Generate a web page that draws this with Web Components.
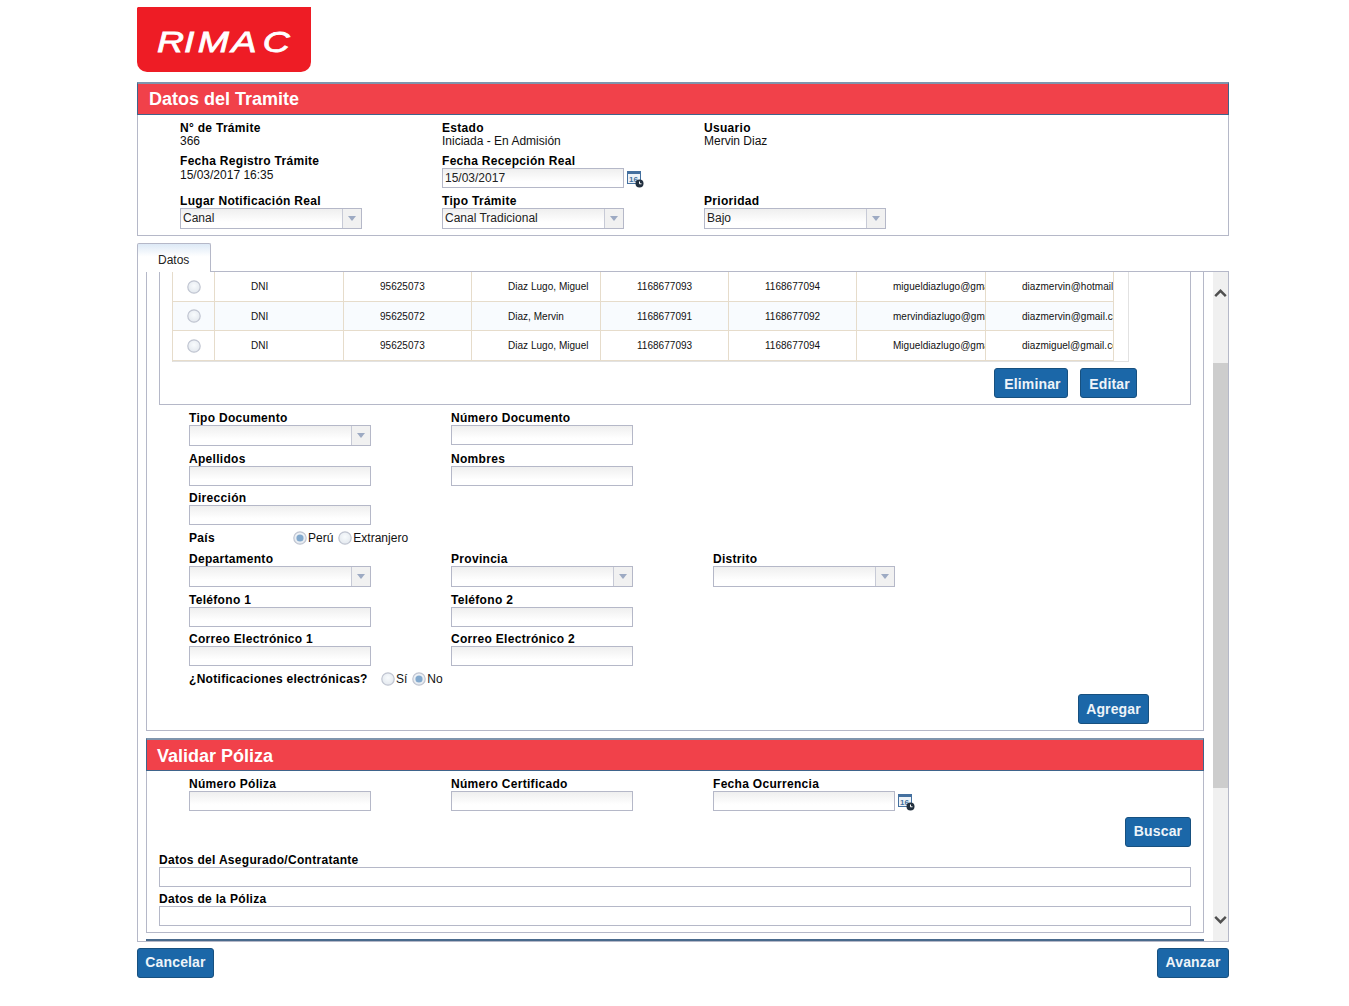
<!DOCTYPE html>
<html lang="es">
<head>
<meta charset="utf-8">
<title>Datos del Tramite</title>
<style>
html,body{margin:0;padding:0;background:#fff}
body{font:12px/13px "Liberation Sans",Arial,sans-serif;color:#000}
rim-app{margin-left:137px}
</style>
</head>
<body>
<rim-app>
  <rim-logo></rim-logo>
  <rim-panel title="Datos del Tramite" outer>
    <rim-row top="7">
      <rim-field label="N° de Trámite" value="366"></rim-field>
      <rim-field label="Estado" value="Iniciada - En Admisión"></rim-field>
      <rim-field label="Usuario" value="Mervin Diaz"></rim-field>
    </rim-row>
    <rim-row top="7">
      <rim-field label="Fecha Registro Trámite" value="15/03/2017 16:35" vgap="1"></rim-field>
      <rim-field label="Fecha Recepción Real" kind="date" value="15/03/2017"></rim-field>
    </rim-row>
    <rim-row top="7" bottom="6">
      <rim-field label="Lugar Notificación Real" kind="combo" value="Canal"></rim-field>
      <rim-field label="Tipo Trámite" kind="combo" value="Canal Tradicional"></rim-field>
      <rim-field label="Prioridad" kind="combo" value="Bajo"></rim-field>
    </rim-row>
  </rim-panel>
  <rim-tab label="Datos"></rim-tab>
  <rim-tabbody>
    <rim-box>
      <rim-group>
        <rim-table></rim-table>
        <rim-actions pad="53" top="6" bottom="6">
          <rim-btn w="74" lh="31" indent="3">Eliminar</rim-btn>
          <rim-btn w="57" lh="31" indent="2">Editar</rim-btn>
        </rim-actions>
      </rim-group>
      <rim-row top="7">
        <rim-field label="Tipo Documento" kind="combo"></rim-field>
        <rim-field label="Número Documento" kind="text"></rim-field>
      </rim-row>
      <rim-row top="7">
        <rim-field label="Apellidos" kind="text"></rim-field>
        <rim-field label="Nombres" kind="text"></rim-field>
      </rim-row>
      <rim-row top="6">
        <rim-field label="Dirección" kind="text"></rim-field>
      </rim-row>
      <rim-row top="6">
        <rim-choice label="País" offset="104">
          <rim-radio checked>Perú</rim-radio>
          <rim-radio>Extranjero</rim-radio>
        </rim-choice>
      </rim-row>
      <rim-row top="8">
        <rim-field label="Departamento" kind="combo"></rim-field>
        <rim-field label="Provincia" kind="combo"></rim-field>
        <rim-field label="Distrito" kind="combo"></rim-field>
      </rim-row>
      <rim-row top="7">
        <rim-field label="Teléfono 1" kind="text"></rim-field>
        <rim-field label="Teléfono 2" kind="text"></rim-field>
      </rim-row>
      <rim-row top="6">
        <rim-field label="Correo Electrónico 1" kind="text"></rim-field>
        <rim-field label="Correo Electrónico 2" kind="text"></rim-field>
      </rim-row>
      <rim-row top="6">
        <rim-choice label="¿Notificaciones electrónicas?" offset="192">
          <rim-radio>Sí</rim-radio>
          <rim-radio checked>No</rim-radio>
        </rim-choice>
      </rim-row>
      <rim-actions pad="54" top="8" bottom="6">
        <rim-btn w="71" lh="29">Agregar</rim-btn>
      </rim-actions>
    </rim-box>
    <rim-panel title="Validar Póliza" inner>
      <rim-row top="7">
        <rim-field label="Número Póliza" kind="text"></rim-field>
        <rim-field label="Número Certificado" kind="text"></rim-field>
        <rim-field label="Fecha Ocurrencia" kind="date"></rim-field>
      </rim-row>
      <rim-actions pad="12" top="6" bottom="7">
        <rim-btn w="66">Buscar</rim-btn>
      </rim-actions>
      <rim-wide label="Datos del Asegurado/Contratante"></rim-wide>
      <rim-wide label="Datos de la Póliza" top="6" bottom="6"></rim-wide>
    </rim-panel>
    <rim-panel title="" inner cut></rim-panel>
  </rim-tabbody>
  <rim-footer>
    <rim-btn w="77">Cancelar</rim-btn>
    <rim-btn w="72">Avanzar</rim-btn>
  </rim-footer>
</rim-app>

<script>
function def(name, css, html, after){
  customElements.define(name, class extends HTMLElement{
    constructor(){super();this.attachShadow({mode:'open'});}
    connectedCallback(){
      const a=n=>this.getAttribute(n);
      this.shadowRoot.innerHTML='<style>'+css+'</style>'+(typeof html==='function'?html(a,this):html);
      if(after)after(this,a);
    }
  });
}
const esc=s=>s==null?'':s;
const margins=(el,a)=>{
  if(a('top'))el.style.marginTop=a('top')+'px';
  if(a('bottom'))el.style.marginBottom=a('bottom')+'px';
};

def('rim-app',':host{display:block;width:1092px;padding-top:7px}','<slot></slot>');

def('rim-logo',
 ':host{display:block;width:174px;height:65px;margin-bottom:10px} svg{display:block}',
 `<svg width="174" height="65" viewBox="0 0 174 65" role="img" aria-label="RIMAC">
   <path d="M1 0H174V55a10 10 0 0 1-10 10H10A10 10 0 0 1 0 55V1z" fill="#ee1c25"/>
   <text transform="scale(1.25 1)" x="16 37.6 48.6 75.6 100.6" y="45" fill="#fff" stroke="#fff" stroke-width=".8" font-family="'Liberation Sans',Arial,sans-serif" font-style="italic" font-size="30">RIMAC</text>
 </svg>`);

def('rim-panel',
 `:host{display:block;box-sizing:border-box;background:#fff}
  :host([outer]){border:1px solid #b5b8c8;border-top:0}
  :host([inner]){width:1058px;margin-left:8px;margin-top:7px;border:1px solid #b5b8c8;border-top:0}
  :host([cut]){margin-top:6px}
  .h{box-sizing:border-box;height:33px;margin:0 -1px;background:#f1414a;border:1px solid #3f648b;border-top:2px solid #7f95ad;color:#fff;
     font:700 18px/30px "Liberation Sans",Arial,sans-serif;padding-left:11px}
  :host([inner]) .h{line-height:32px;padding-left:10px}
  :host([cut]) .h{border-top-color:#4a6a8c}`,
 a=>`<div class="h">${esc(a('title'))}</div><slot></slot>`);

def('rim-row',
 ':host{display:flex;padding-left:42px}',
 '<slot></slot>', margins);

const lab='font:700 12px/13px "Liberation Sans",Arial,sans-serif;letter-spacing:.3px;color:#000;white-space:nowrap';
const val='font:12px/13px "Liberation Sans",Arial,sans-serif;color:#111';
const inp=`box-sizing:border-box;width:182px;border:1px solid #b5b8c8;background:linear-gradient(#efefef,#fff 70%);`;
const calIcon=`<svg class="cal" width="17" height="17" viewBox="0 0 17 17" aria-hidden="true">
  <rect x="0" y="0" width="14" height="13" fill="#44709f"/>
  <rect x="1" y="3" width="12" height="9" fill="#eef3f8"/>
  <text x="2" y="11" font-family="'Liberation Sans',Arial,sans-serif" font-weight="700" font-size="8" fill="#44709f">16</text>
  <circle cx="12.5" cy="12.5" r="4" fill="#22303f"/>
  <path d="M12.5 10.5v2.3h2" stroke="#fff" stroke-width="1" fill="none"/>
</svg>`;
def('rim-field',
 `:host{display:block;width:262px;flex:none}
  .l{${lab}} .v{${val}}
  .i{${inp}height:20px;${val};padding:3px 2px 0;color:#222;line-height:13px}
  .c{${inp}height:21px;display:flex;${val};color:#222}
  .c .t{flex:1;padding:3px 2px 0}
  .c .b{width:19px;box-sizing:border-box;border-left:1px solid #c7cad6;background:#f1f1f1;display:flex;align-items:center;justify-content:center}
  .c .b i{display:block;width:0;height:0;border:4px solid transparent;border-top:5px solid #9daac3;border-bottom:0}
  .d{display:flex;align-items:flex-start}
  .cal{margin:3px 0 0 3px;flex:none}`,
 a=>{
   const k=a('kind'),v=esc(a('value'));
   let b=`<div class="v" style="margin-top:${a('vgap')||0}px">${v}</div>`;
   if(k==='text')b=`<div class="i">${v}</div>`;
   if(k==='date')b=`<div class="d"><div class="i">${v}</div>${calIcon}</div>`;
   if(k==='combo')b=`<div class="c"><div class="t">${v}</div><div class="b"><i></i></div></div>`;
   return `<div class="l">${esc(a('label'))}</div>${b}`;
 });

def('rim-wide',
 `:host{display:block;margin-left:12px;width:1032px}
  .l{${lab}} .i{box-sizing:border-box;height:20px;border:1px solid #b5b8c8;background:#fff}`,
 a=>`<div class="l">${esc(a('label'))}</div><div class="i"></div>`, margins);

def('rim-choice',
 `:host{display:flex;align-items:center;height:14px;width:600px}
  .l{${lab};flex:none}
  .o{display:flex;gap:5px}`,
 a=>`<div class="l" style="width:${a('offset')}px">${esc(a('label'))}</div><div class="o"><slot></slot></div>`);

const radioSvg=(on,s)=>`<svg width="${s}" height="${s}" viewBox="0 0 14 14" aria-hidden="true" style="display:block;flex:none">
  <defs><radialGradient id="g" cx=".5" cy=".4" r=".6"><stop offset="0" stop-color="#f8fbfd"/><stop offset="1" stop-color="#e3e8ee"/></radialGradient></defs>
  <circle cx="7" cy="7" r="6.2" fill="url(#g)" stroke="#c0c5d1" stroke-width="1.2"/>
  ${on?'<circle cx="7" cy="7" r="3.6" fill="#83a9cd"/>':''}
</svg>`;
def('rim-radio',
 `:host{display:flex;align-items:center;gap:1px;${val};white-space:nowrap}`,
 (a,el)=>radioSvg(el.hasAttribute('checked'),14)+'<slot></slot>');

def('rim-btn',
 `:host{display:block;box-sizing:border-box;height:30px;background:#1b67a8;border:1px solid #17507f;border-radius:3px;
   color:#eef4f9;font:700 14px/27px "Liberation Sans",Arial,sans-serif;letter-spacing:.15px;text-align:center;white-space:nowrap;flex:none}`,
 '<slot></slot>', (el,a)=>{
   if(a('w')) el.style.width=a('w')+'px';
   if(a('lh')) el.style.lineHeight=a('lh')+'px';
   if(a('indent')) el.style.paddingLeft=a('indent')+'px';
 });

def('rim-actions',
 ':host{display:flex;justify-content:flex-end;gap:12px}',
 '<slot></slot>', (el,a)=>{ margins(el,a); el.style.paddingRight=a('pad')+'px'; });

def('rim-tab',
 `:host{display:block;position:relative;z-index:1;box-sizing:border-box;width:74px;height:29px;margin-top:7px;margin-bottom:-1px;
    border:1px solid #b5b8c8;border-bottom:0;border-radius:2px 2px 0 0;background:linear-gradient(#dde9f6,#fff 45%);
    font:12px/13px "Liberation Sans",Arial,sans-serif;color:#222;padding:10px 0 0 20px}`,
 a=>esc(a('label')));

def('rim-tabbody',
 `:host{display:flex;box-sizing:border-box;height:671px;border:1px solid #b5b8c8;background:#fff}
  .view{width:1075px;height:669px;overflow:hidden;flex:none}
  .bar{width:15px;flex:none;background:#f0f0f0;display:flex;flex-direction:column;align-items:stretch}
  .arrow{height:91px;flex:none;display:flex;justify-content:center;align-items:flex-start;padding-top:0;box-sizing:border-box}
  .arrow svg{margin-top:16px}
  .thumb{height:425px;flex:none;background:#cdcdcd}
  .rest{flex:1;display:flex;justify-content:center;align-items:flex-end}
  .rest svg{margin-bottom:16px}`,
 `<div class="view"><slot></slot></div>
  <div class="bar">
    <div class="arrow"><svg width="13" height="10" viewBox="0 0 13 10"><path d="M1.2 8.2 6.5 2.8l5.3 5.4" fill="none" stroke="#505050" stroke-width="2.4"/></svg></div>
    <div class="thumb"></div>
    <div class="rest"><svg width="13" height="10" viewBox="0 0 13 10"><path d="M1.2 1.8 6.5 7.2l5.3-5.4" fill="none" stroke="#505050" stroke-width="2.4"/></svg></div>
  </div>`);

def('rim-box',
 `:host{display:block;box-sizing:border-box;width:1058px;margin-left:8px;border:1px solid #b5b8c8;border-top:0;background:#fff}`,
 '<slot></slot>');

def('rim-group',
 `:host{display:block;box-sizing:border-box;width:1032px;margin-left:12px;border:1px solid #b5b8c8;border-top:0}`,
 '<slot></slot>');

const rows=[
 ['DNI','95625073','Diaz Lugo, Miguel','1168677093','1168677094','migueldiazlugo@gmail.com','diazmervin@hotmail.com'],
 ['DNI','95625072','Diaz, Mervin','1168677091','1168677092','mervindiazlugo@gmail.com','diazmervin@gmail.com'],
 ['DNI','95625073','Diaz Lugo, Miguel','1168677093','1168677094','Migueldiazlugo@gmail.com','diazmiguel@gmail.com']
];
def('rim-table',
 `:host{display:block;box-sizing:border-box;width:957px;margin-left:12px;border:1px solid #e2e2e2;border-top:0;border-left-color:#e6dccb}
  .r{display:grid;grid-template-columns:42px 129px 128px 129px 128px 128px 129px 128px;width:941px;border-bottom:1px solid #e6dccb;box-sizing:border-box}
  .r.a{height:30px}.r.b{height:29px;background:#f8fbfe}.r.c{height:30px}
  .r>div{box-sizing:border-box;border-right:1px solid #e6dccb;overflow:hidden;white-space:nowrap;
     font:10px/30px "Liberation Sans",Arial,sans-serif;letter-spacing:.03px;color:#111;padding-left:36px}
  .r>div.x{padding:0;display:flex;align-items:center;justify-content:center}
  .r>div:last-child{padding-right:0}`,
 ()=>rows.map((r,i)=>`<div class="r ${'abc'[i]}"><div class="x">${radioSvg(false,14)}</div>${r.map(c=>`<div>${c}</div>`).join('')}</div>`).join(''));

def('rim-footer',
 ':host{display:flex;justify-content:space-between;margin-top:6px}',
 '<slot></slot>');
</script>
</body>
</html>
